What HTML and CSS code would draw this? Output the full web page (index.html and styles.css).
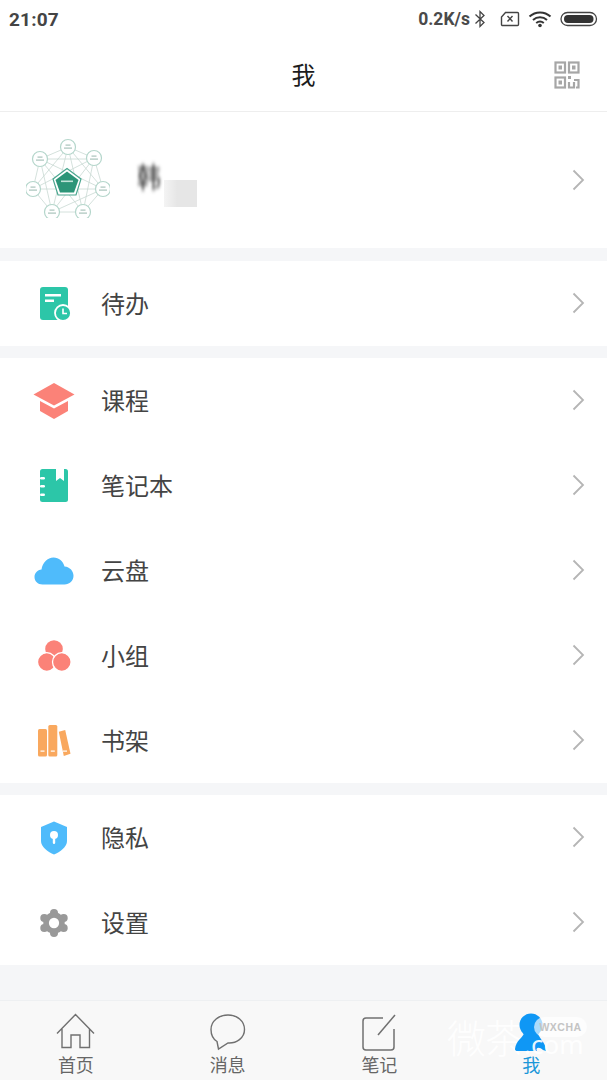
FILE: index.html
```html
<!DOCTYPE html>
<html lang="zh">
<head>
<meta charset="utf-8">
<title>我</title>
<link rel="stylesheet" href="styles.css">
</head>
<body>
<div class="app">
  <div class="status">
    <span class="time">21:07</span>
    <div class="status-right">
      <span class="speed">0.2K/s</span>
      <svg class="st-bt" width="12" height="20" viewBox="0 0 12 20"><path d="M1.500 5.500 10 13.500 6 17.500V2.500L10 6.500 1.500 14.500" fill="none" stroke="#444" stroke-width="1.300"/></svg>
      <svg class="st-sim" width="20" height="16" viewBox="0 0 20 16"><path d="M5.500 1.500H17.500a1 1 0 0 1 1 1V13.500a1 1 0 0 1-1 1H2.500a1 1 0 0 1-1-1V6Z" fill="none" stroke="#444" stroke-width="1.400"/><path d="M7.500 5 12.500 10.500M12.500 5 7.500 10.500" stroke="#444" stroke-width="1.400"/></svg>
      <svg class="st-wifi" width="24" height="18" viewBox="0 0 24 18"><path d="M1.500 6.500C7.500 1 16.500 1 22.500 6.500M5 10C9 6.400 15 6.400 19 10M8.200 13C10.400 11.200 13.600 11.200 15.800 13" fill="none" stroke="#333" stroke-width="2"/><circle cx="12" cy="15.500" r="1.800" fill="#333"/></svg>
      <svg class="st-bat" width="38" height="16" viewBox="0 0 38 16"><rect x="1" y="1.500" width="35.500" height="13" rx="6.500" fill="none" stroke="#444" stroke-width="1.300"/><rect x="4" y="4" width="29.500" height="8" rx="4" fill="#333"/></svg>
    </div>
  </div>

  <header class="nav">
    <h1 class="nav-title">我</h1>
    <svg class="nav-qr" width="26" height="28" viewBox="0 0 26 28"><g fill="none" stroke="#a6a6a6" stroke-width="2.200"><rect x="1.500" y="1.500" width="9.500" height="10"/><rect x="15" y="1.500" width="9.500" height="10"/><rect x="1.500" y="16.500" width="9.500" height="10"/><path d="M15 21v5.500h5V21M20 19h4.500V26.500H22"/></g><g fill="#a6a6a6"><rect x="4.500" y="4.500" width="3.500" height="4"/><rect x="18" y="4.500" width="3.500" height="4"/><rect x="4.500" y="19.500" width="3.500" height="4"/><rect x="14" y="15" width="3" height="3"/></g></svg>
  </header>

  <section class="profile">
    <svg class="avatar" width="84" height="84" viewBox="0 0 84 84">
      <defs><clipPath id="av"><rect x="0" y="0" width="84" height="80"/></clipPath></defs>
      <g clip-path="url(#av)">
        <g fill="none" stroke="#c9d9d3" stroke-width=".8">
          <path d="M42 9 68 20 77 51 57 74 26 74 7 51 14 21Z"/>
          <path d="M42 9 77 51 26 74 14 21 57 74 68 20 7 51ZM42 9 57 74M42 9 26 74M68 20 26 74M14 21 77 51M14 21H68M7 51H77"/>
        </g>
        <g fill="#fff" stroke="#b4d6cb" stroke-width="1.200">
          <circle cx="42" cy="9" r="7.500"/><circle cx="68" cy="20" r="7.500"/><circle cx="77" cy="51" r="7.500"/><circle cx="57" cy="74" r="7.500"/><circle cx="26" cy="74" r="7.500"/><circle cx="7" cy="51" r="7.500"/><circle cx="14" cy="21" r="7.500"/>
        </g>
        <g fill="#a9c4bb">
          <rect x="39.500" y="6.500" width="5" height="1.200"/><rect x="38" y="9.500" width="8" height="1.200"/>
          <rect x="65.500" y="17.500" width="5" height="1.200"/><rect x="64" y="20.500" width="8" height="1.200"/>
          <rect x="74.500" y="48.500" width="5" height="1.200"/><rect x="73" y="51.500" width="8" height="1.200"/>
          <rect x="54.500" y="71.500" width="5" height="1.200"/><rect x="53" y="74.500" width="8" height="1.200"/>
          <rect x="23.500" y="71.500" width="5" height="1.200"/><rect x="22" y="74.500" width="8" height="1.200"/>
          <rect x="4.500" y="48.500" width="5" height="1.200"/><rect x="3" y="51.500" width="8" height="1.200"/>
          <rect x="11.500" y="18.500" width="5" height="1.200"/><rect x="10" y="21.500" width="8" height="1.200"/>
        </g>
        <path d="M41 30.500 55 41 50 57H32L27 41Z" fill="#fff" stroke="#4aa68f" stroke-width="1.200"/>
        <path d="M41 33.500 52.500 42 48 54.500H34L29.500 42Z" fill="#2c9578"/>
        <rect x="35" y="42.500" width="12" height="1.600" fill="#bfe3d8"/>
      </g>
    </svg>
    <div class="name-wrap">
      <span class="name">韩</span>
      <span class="name-mask"></span>
    </div>
    <svg class="chev" width="13" height="22" viewBox="0 0 13 22"><path d="M1.500 1.500 11 11 1.500 20.500" fill="none" stroke="#b5b5b5" stroke-width="1.800"/></svg>
  </section>

  <section class="group">
    <div class="row">
      <span class="ico">
        <svg width="34" height="36" viewBox="0 0 34 36"><rect x="3" y="1" width="28" height="33" rx="3" fill="#2cc6a8"/><rect x="8" y="8" width="16" height="2.500" fill="#fff"/><rect x="8" y="13.500" width="9" height="2.500" fill="#fff"/><circle cx="26" cy="27" r="8" fill="#2cc6a8" stroke="#fff" stroke-width="1.800"/><path d="M26 22.500V27.500H30" fill="none" stroke="#fff" stroke-width="1.600"/></svg>
      </span>
      <span class="label">待办</span>
      <svg class="chev" width="13" height="22" viewBox="0 0 13 22"><path d="M1.500 1.500 11 11 1.500 20.500" fill="none" stroke="#b5b5b5" stroke-width="1.800"/></svg>
    </div>
  </section>

  <section class="group">
    <div class="row">
      <span class="ico">
        <svg width="42" height="36" viewBox="0 0 42 36"><path d="M21 0 41.500 11.500 21 22.500 .5 11.500Z" fill="#fb8278"/><path d="M7 18 21 25.500 35 18V28L21 36 7 28Z" fill="#fb8278"/></svg>
      </span>
      <span class="label">课程</span>
      <svg class="chev" width="13" height="22" viewBox="0 0 13 22"><path d="M1.500 1.500 11 11 1.500 20.500" fill="none" stroke="#b5b5b5" stroke-width="1.800"/></svg>
    </div>
    <div class="row">
      <span class="ico">
        <svg width="28" height="33" viewBox="0 0 28 33"><rect x="0" y="0" width="28" height="33" rx="2.500" fill="#2cc6a8"/><path d="M16 0H24V12L20 9 16 12Z" fill="#fff"/><g fill="#fff"><rect x="0" y="8" width="5" height="2.500" rx="1.200"/><rect x="0" y="16" width="5" height="2.500" rx="1.200"/><rect x="0" y="24.500" width="5" height="2.500" rx="1.200"/></g></svg>
      </span>
      <span class="label">笔记本</span>
      <svg class="chev" width="13" height="22" viewBox="0 0 13 22"><path d="M1.500 1.500 11 11 1.500 20.500" fill="none" stroke="#b5b5b5" stroke-width="1.800"/></svg>
    </div>
    <div class="row">
      <span class="ico">
        <svg width="40" height="28" viewBox="0 0 40 28"><path d="M8.500 27.500C3.800 27.500 .5 24.200 .5 20 .5 16 3.500 13 7.500 12.500 8.500 5.500 13.500 .5 19.500 .5 25 .5 29 4 30.500 9.500 36 10 39.500 14 39.500 18.800 39.500 24 35.500 27.500 30.500 27.500Z" fill="#4fbbfb"/></svg>
      </span>
      <span class="label">云盘</span>
      <svg class="chev" width="13" height="22" viewBox="0 0 13 22"><path d="M1.500 1.500 11 11 1.500 20.500" fill="none" stroke="#b5b5b5" stroke-width="1.800"/></svg>
    </div>
    <div class="row">
      <span class="ico">
        <svg width="33" height="31" viewBox="0 0 33 31"><circle cx="16" cy="9" r="8.800" fill="#fb8278"/><circle cx="8.800" cy="22" r="9.300" fill="#fb8278" stroke="#fff" stroke-width="1.300"/><circle cx="23.800" cy="22" r="9.300" fill="#fb8278" stroke="#fff" stroke-width="1.300"/></svg>
      </span>
      <span class="label">小组</span>
      <svg class="chev" width="13" height="22" viewBox="0 0 13 22"><path d="M1.500 1.500 11 11 1.500 20.500" fill="none" stroke="#b5b5b5" stroke-width="1.800"/></svg>
    </div>
    <div class="row">
      <span class="ico">
        <svg width="33" height="32" viewBox="0 0 33 32"><rect x="0" y="4" width="9" height="27.500" rx="1.500" fill="#f9a85e"/><rect x="10.300" y="0" width="9" height="31.500" rx="1.500" fill="#f9a85e"/><path d="M20.800 6.700 27.200 5 32.500 28.700 25.800 31Z" fill="#f9a85e"/><g fill="#fff"><rect x="2.500" y="25.500" width="4" height="1.200"/><rect x="12.800" y="25.500" width="4" height="1.200"/><rect x="25" y="25.500" width="4" height="1.200"/></g></svg>
      </span>
      <span class="label">书架</span>
      <svg class="chev" width="13" height="22" viewBox="0 0 13 22"><path d="M1.500 1.500 11 11 1.500 20.500" fill="none" stroke="#b5b5b5" stroke-width="1.800"/></svg>
    </div>
  </section>

  <section class="group">
    <div class="row">
      <span class="ico">
        <svg width="28" height="34" viewBox="0 0 28 34"><path d="M14 .5 27 6V20C27 26 20 31 14 33.500 8 31 1 26 1 20V6Z" fill="#4fbbfb"/><circle cx="14" cy="14" r="4" fill="#fff"/><rect x="12.800" y="15" width="2.400" height="8" rx="1.200" fill="#fff"/></svg>
      </span>
      <span class="label">隐私</span>
      <svg class="chev" width="13" height="22" viewBox="0 0 13 22"><path d="M1.500 1.500 11 11 1.500 20.500" fill="none" stroke="#b5b5b5" stroke-width="1.800"/></svg>
    </div>
    <div class="row">
      <span class="ico">
        <svg width="30" height="28" viewBox="0 0 32 30"><g fill="#999"><circle cx="16" cy="4.300" r="4.300"/><circle cx="16" cy="25.700" r="4.300"/><circle cx="5.600" cy="9.600" r="4.300"/><circle cx="26.400" cy="9.600" r="4.300"/><circle cx="5.600" cy="20.400" r="4.300"/><circle cx="26.400" cy="20.400" r="4.300"/><circle cx="16" cy="15" r="11.500"/></g><circle cx="16" cy="15" r="5.500" fill="#fff"/></svg>
      </span>
      <span class="label">设置</span>
      <svg class="chev" width="13" height="22" viewBox="0 0 13 22"><path d="M1.500 1.500 11 11 1.500 20.500" fill="none" stroke="#b5b5b5" stroke-width="1.800"/></svg>
    </div>
  </section>

  <nav class="tabs">
    <div class="tab">
      <svg class="tab-ico" width="40" height="39" viewBox="0 0 40 39"><path d="M1 20.500 19.500 1.500 38 20.500M6 16V34.500H15V22H24V34.500H33.500V16" fill="none" stroke="#707070" stroke-width="1.400"/></svg>
      <span class="tab-label">首页</span>
    </div>
    <div class="tab">
      <svg class="tab-ico" width="38" height="39" viewBox="0 0 38 38"><path d="M19 1.500C28 1.500 35.500 7.500 35.500 16 35.500 24.500 27.500 30 19 29.500L9.500 35.500 8 28C4 25.500 2 21 2 16 2 7.500 10 1.500 19 1.500Z" fill="none" stroke="#707070" stroke-width="1.400"/></svg>
      <span class="tab-label">消息</span>
    </div>
    <div class="tab">
      <svg class="tab-ico" width="36" height="39" viewBox="0 0 36 39"><path d="M22 5H5a3 3 0 0 0-3 3V34a3 3 0 0 0 3 3H30a3 3 0 0 0 3-3V16" fill="none" stroke="#707070" stroke-width="1.500"/><path d="M17 22 34 2" fill="none" stroke="#707070" stroke-width="1.500"/></svg>
      <span class="tab-label">笔记</span>
    </div>
    <div class="tab">
      <svg class="tab-ico tab-ico-active" width="32" height="39" viewBox="0 0 32 39"><circle cx="16" cy="12" r="11.500" fill="#0f97f5"/><path d="M9 20C8 25 1 27 0 36 0 37.500 1 38 2.500 38H22C20 35 24 33 28 37L31 38C31 29 24 26 23 20Z" fill="#0f97f5"/></svg>
      <span class="tab-label tab-active">我</span>
    </div>
  </nav>

  <span class="wm-cn">微茶</span>
  <span class="wm-com">.com</span>
  <span class="wm-badge">WXCHA</span>
</div>
</body>
</html>
```

FILE: styles.css
```css
* { box-sizing: border-box; margin: 0; padding: 0; }
html, body { width: 607px; height: 1080px; overflow: hidden; }
body { font-family: "Noto Sans CJK SC", "Noto Sans", sans-serif; background: #f5f6f8; }
.app { position: relative; width: 607px; height: 1080px; display: flex; flex-direction: column; }

.status { height: 38px; background: #fff; display: flex; align-items: center; justify-content: space-between; padding: 0 9px 0 9px; }
.time { font-family: Roboto, sans-serif; font-weight: 700; font-size: 19px; color: #444; letter-spacing: .2px; }
.status-right { display: flex; align-items: center; }
.speed { font-family: Roboto, sans-serif; font-weight: 700; font-size: 17.500px; color: #4a4a4a; }
.st-bt { margin-left: 4px; }
.st-sim { margin-left: 14px; }
.st-wifi { margin-left: 8px; }
.st-bat { margin-left: 8px; }

.nav { height: 74px; background: #fff; border-bottom: 1px solid #eeeeee; display: flex; align-items: center; justify-content: center; position: relative; padding-bottom: 2px; }
.nav-title { font-size: 24px; font-weight: 400; color: #1c1c1c; line-height: 1; }
.nav-qr { position: absolute; right: 27px; top: 23px; }

.profile { height: 136px; background: #fff; margin-bottom: 13px; display: flex; align-items: center; padding: 0 22px 0 26px; }
.avatar { flex: none; }
.name-wrap { position: relative; margin-left: 27px; flex: 1; height: 44px; }
.name { position: absolute; left: 0; top: 2px; font-size: 24px; line-height: 32px; color: #333; filter: blur(1.800px); transform: scaleY(1.200); }
.name-mask { position: absolute; left: 27px; top: 22px; width: 33px; height: 27px; background: linear-gradient(to right, #f4f4f4, #e6e6e6 40%); }
.chev { flex: none; }

.group { background: #fff; margin-bottom: 12px; }
.row { height: 85px; display: flex; align-items: center; padding: 0 22px 2px 26px; }
.ico { width: 56px; height: 44px; flex: none; display: flex; align-items: center; justify-content: center; margin-bottom: -2px; }
.label { margin-left: 19px; flex: 1; font-size: 24px; line-height: 32px; color: #444; }

.tabs { position: absolute; left: 0; right: 0; bottom: 0; height: 80px; background: #f8f8f8; border-top: 1px solid #eef0f2; display: grid; grid-template-columns: repeat(4, 1fr); }
.tab { display: flex; flex-direction: column; align-items: center; padding-top: 12px; }
.tab-ico { flex: none; }
.tab-ico-active { position: relative; z-index: 2; }
.tab-label { font-size: 18px; line-height: 24px; color: #666; }
.tab-active { color: #1b97d8; }

.wm-cn { position: absolute; z-index: 1; left: 447px; top: 1011px; font-size: 39px; line-height: 50px; font-weight: 300; white-space: nowrap; letter-spacing: -1px; color: rgba(255,255,255,.92); }
.wm-com { position: absolute; z-index: 3; left: 524px; top: 1028px; font: 400 26px/32px "Noto Sans", sans-serif; color: rgba(255,255,255,.92); }
.wm-badge { position: absolute; z-index: 3; left: 534px; top: 1017px; width: 53px; height: 20px; border-radius: 10px; background: rgba(255,255,255,.65); color: #c4c4c4; font: 700 10.500px/20px "Liberation Sans", sans-serif; text-align: center; letter-spacing: .5px; }
```
